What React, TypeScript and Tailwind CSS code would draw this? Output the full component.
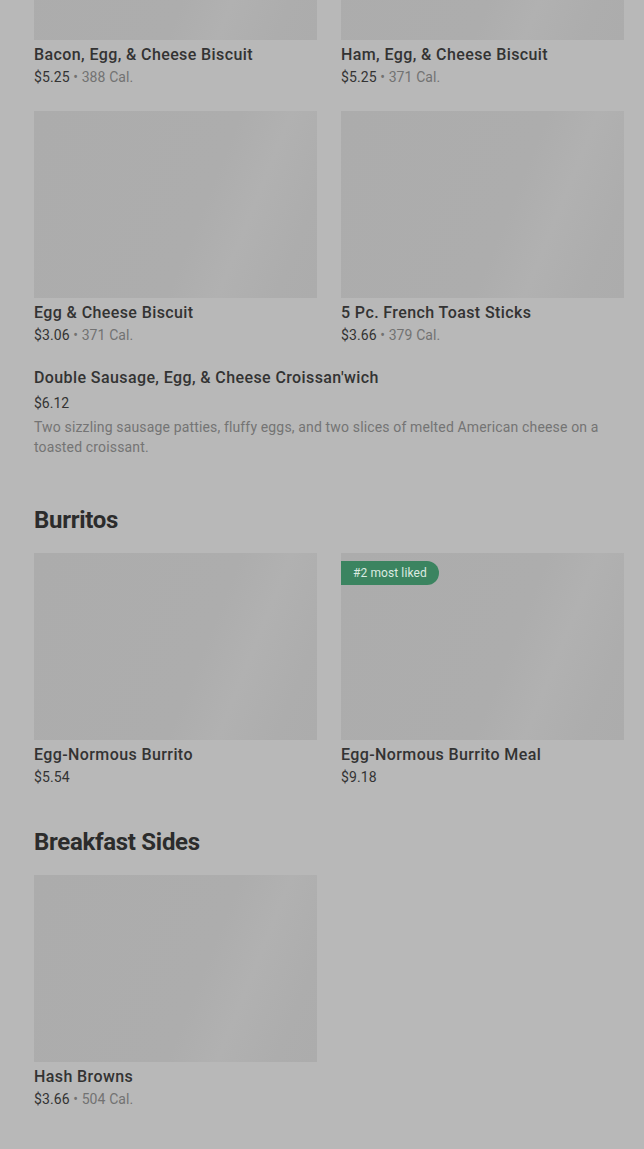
import React from "react";

type Item = {
  name: string;
  price: string;
  cal?: string;
  badge?: string;
};

const shimmer =
  "bg-[linear-gradient(112deg,#acacac_0%,#adadad_58%,#b1b1b1_72%,#adadad_88%,#acacac_100%)]";

function Card({ item }: { item: Item }) {
  return (
    <div className="flex flex-col h-[234px]">
      <div className={`relative h-[187px] w-full shrink-0 ${shimmer}`}>
        {item.badge && (
          <span className="absolute left-0 top-[8px] h-[24px] pl-[12px] pr-[12px] flex items-center rounded-r-full bg-[#3b8460] text-[12px] tracking-[0.1px] text-[#dcebe1]">
            {item.badge}
          </span>
        )}
      </div>
      <div className="mt-[4px] text-[16px] leading-[22px] font-medium tracking-[0.4px] text-[#333333]">
        {item.name}
      </div>
      <div className="mt-[1px] text-[14px] leading-[20px] tracking-[0.1px]">
        <span className="text-[#333333]">{item.price}</span>
        {item.cal && <span className="text-[#727272]"> • {item.cal}</span>}
      </div>
    </div>
  );
}

function Grid({ items }: { items: Item[] }) {
  return (
    <div className="grid grid-cols-2 gap-x-[24px] gap-y-[24px]">
      {items.map((it) => (
        <Card key={it.name} item={it} />
      ))}
    </div>
  );
}

export default function App() {
  return (
    <main
      className="min-h-screen bg-[#b8b8b8] overflow-hidden"
      style={{ fontFamily: "Roboto, 'Liberation Sans', sans-serif" }}
    >
      <div className="pl-[34px] pr-[20px] mt-[-147px]">
        <Grid
          items={[
            { name: "Bacon, Egg, & Cheese Biscuit", price: "$5.25", cal: "388 Cal." },
            { name: "Ham, Egg, & Cheese Biscuit", price: "$5.25", cal: "371 Cal." },
            { name: "Egg & Cheese Biscuit", price: "$3.06", cal: "371 Cal." },
            { name: "5 Pc. French Toast Sticks", price: "$3.66", cal: "379 Cal." },
          ]}
        />

        <div className="mt-[22px]">
          <div className="text-[16px] leading-[22px] font-medium tracking-[0.4px] text-[#333333]">
            Double Sausage, Egg, &amp; Cheese Croissan'wich
          </div>
          <div className="mt-[4px] text-[14px] leading-[20px] text-[#333333]">$6.12</div>
          <p className="mt-[4px] text-[14px] leading-[20px] tracking-[0.15px] text-[#747474] pr-[20px]">
            Two sizzling sausage patties, fluffy eggs, and two slices of melted American cheese on a
            toasted croissant.
          </p>
        </div>

        <h2 className="mt-[47px] text-[24px] leading-[32px] font-bold tracking-[-0.3px] text-[#2c2c2c]">
          Burritos
        </h2>
        <div className="mt-[17px]">
          <Grid
            items={[
              { name: "Egg-Normous Burrito", price: "$5.54" },
              { name: "Egg-Normous Burrito Meal", price: "$9.18", badge: "#2 most liked" },
            ]}
          />
        </div>

        <h2 className="mt-[39px] text-[24px] leading-[32px] font-bold tracking-[-0.3px] text-[#2c2c2c]">
          Breakfast Sides
        </h2>
        <div className="mt-[17px]">
          <Grid items={[{ name: "Hash Browns", price: "$3.66", cal: "504 Cal." }]} />
        </div>
      </div>
    </main>
  );
}
